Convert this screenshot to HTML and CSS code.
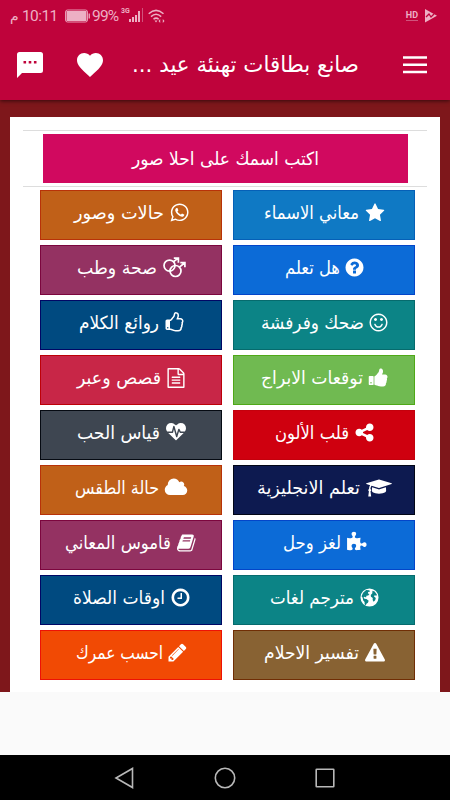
FILE: index.html
```html
<!DOCTYPE html>
<html lang="ar" dir="rtl">
<head>
<meta charset="utf-8">
<title>صانع بطاقات تهنئة عيد</title>
<link rel="stylesheet" href="styles.css">
</head>
<body>
<header class="header">
  <div class="status" dir="ltr">
    <span class="meridiem">م</span><span class="time">10:11</span>
    <svg class="battery" viewBox="0 0 26 14"><rect x=".5" y="1" width="22" height="12" rx="2" fill="none" stroke="#e89bb4"/><rect x="1.500" y="2" width="20" height="10" fill="#edb0c4"/><path d="M23.500 4.500h1.500v5h-1.500z" fill="#e89bb4"/></svg>
    <span class="percent">99%</span>
    <span class="network">3G</span>
    <svg class="signal" viewBox="0 0 15 15"><path d="M0 11h2v3H0zM3 9h2v5H3zM6 7h2v7H6zM9 3h2v11H9z" fill="#edb0c4"/><path d="M13.500 0v14" stroke="#d0537c"/></svg>
    <svg class="wifi" viewBox="0 0 17 15"><g fill="none" stroke="#edb0c4" stroke-width="1.500"><path d="M.7 4.800Q8 -2 15.500 4.800M3 7.600q5-4.600 10.200 0M5.500 10.300q2.600-2.400 5.200 0"/></g><path d="M6.500 11.500h3L8 13.500zM10.500 12l1.700-2v4zM16.500 12l-1.700-2v4z" fill="#edb0c4"/></svg>
    <span class="spacer"></span>
    <span class="hd">HD</span>
    <svg class="play" viewBox="0 0 12 14"><path d="M0 0l12 6.800L0 13.600z" fill="#edb0c4"/><path d="M1 8l3-3 2 3 3-3" fill="none" stroke="#bf033b" stroke-width="1.300"/></svg>
  </div>
  <div class="toolbar">
    <svg class="menu" viewBox="0 0 24 18"><path d="M0 1.500h24M0 8.800h24M0 16h24" stroke="#fff" stroke-width="2.600"/></svg>
    <h1 class="title"><svg class="label" width="227" height="32"><text x="50%" y="23" textLength="227" lengthAdjust="spacingAndGlyphs">صانع بطاقات تهنئة عيد ...</text></svg></h1>
    <svg class="heart" viewBox="2 3 20 18.350"><path fill="#fff" d="M12 21.350l-1.450-1.320C5.400 15.360 2 12.280 2 8.500 2 5.420 4.420 3 7.500 3c1.740 0 3.410.81 4.500 2.090C13.090 3.810 14.760 3 16.500 3 19.580 3 22 5.420 22 8.500c0 3.780-3.400 6.860-8.550 11.540z"/></svg>
    <svg class="chat" viewBox="0 0 26 26"><path fill="#fff" fill-rule="evenodd" d="M2.500 0h21Q26 0 26 2.500v16Q26 21 23.500 21H5l-5 5V2.500Q0 0 2.500 0zM6.500 9v2.600h2.600V9zM11.700 9v2.600h2.600V9zM16.900 9v2.600h2.600V9z"/></svg>
  </div>
</header>
<main class="content">
  <section class="card">
    <div class="feature"><a class="banner"><svg class="label" width="187" height="26"><text x="50%" y="19" textLength="187" lengthAdjust="spacingAndGlyphs">اكتب اسمك على احلا صور</text></svg></a></div>
    <div class="grid">
      <a class="tile azure"><svg class="icon" viewBox="0 0 1792 1792"><path d="M1728 647q0 22-26 48l-363 354 86 500q1 7 1 20 0 21-10.500 35.500t-30.500 14.500q-19 0-40-12l-449-236-449 236q-22 12-40 12-21 0-31.500-14.500t-10.500-35.500q0-6 2-20l86-500-364-354q-25-27-25-48 0-37 56-46l502-73 225-455q19-41 49-41t49 41l225 455 502 73q56 9 56 46z"/></svg><svg class="label" width="95" height="26"><text x="50%" y="19" textLength="95" lengthAdjust="spacingAndGlyphs">معاني الاسماء</text></svg></a>
      <a class="tile orange"><svg class="icon slim" viewBox="0 0 1792 1792"><path d="M1113 974q13 0 97.500 44t89.500 53q2 5 2 15 0 33-17 76-16 39-71 65.500t-102 26.500q-57 0-190-62-98-45-170-118t-148-185q-72-107-71-194v-8q3-91 74-158 24-22 52-22 6 0 18 1.500t19 1.500q19 0 26.500 6.500t15.500 27.500q8 20 33 88t25 75q0 21-34.500 57.500t-34.500 46.500q0 7 5 15 34 73 102 137 56 53 151 101 12 7 22 7 15 0 54-48.500t52-48.500zm-203 530q127 0 243.500-50t200.500-134 134-200.500 50-243.500-50-243.500-134-200.500-200.500-134-243.500-50-243.500 50-200.500 134-134 200.500-50 243.500q0 203 120 368l-79 233 242-77q158 104 345 104zm0-1382q153 0 292.500 60t240.500 161 161 240.500 60 292.500-60 292.500-161 240.500-240.500 161-292.500 60q-195 0-365-94l-417 134 136-405q-108-178-108-389 0-153 60-292.500t161-240.500 240.500-161 292.500-60z"/></svg><svg class="label" width="90" height="26"><text x="50%" y="19" textLength="90" lengthAdjust="spacingAndGlyphs">حالات وصور</text></svg></a>
      <a class="tile blue"><svg class="icon slim" viewBox="0 0 1792 1792"><path d="M1024 1376v-192q0-14-9-23t-23-9h-192q-14 0-23 9t-9 23v192q0 14 9 23t23 9h192q14 0 23-9t9-23zm256-672q0-88-55.500-163t-138.500-116-170-41q-243 0-371 213-15 24 8 42l132 100q7 6 19 6 16 0 25-12 53-68 86-92 34-24 86-24 48 0 85.500 26t37.500 59q0 38-20 61t-68 45q-63 28-115.500 86.500t-52.500 125.500v36q0 14 9 23t23 9h192q14 0 23-9t9-23q0-19 21.500-49.500t54.500-49.500q32-18 49-28.500t46-35 44.500-48 28-60.500 12.500-81zm384 192q0 209-103 385.500t-279.500 279.500-385.500 103-385.500-103-279.500-279.500-103-385.500 103-385.500 279.500-279.500 385.500-103 385.500 103 279.500 279.500 103 385.500z"/></svg><svg class="label" width="55" height="26"><text x="50%" y="19" textLength="55" lengthAdjust="spacingAndGlyphs">هل تعلم</text></svg></a>
      <a class="tile plum"><svg class="icon mars" viewBox="0 0 23 21"><g fill="none" stroke="#fff" stroke-width="1.700"><circle cx="6.500" cy="8.600" r="5.500"/><circle cx="12.500" cy="14" r="5.500"/><path d="M10.400 4.700L15 1.400M10.800 1.200h4.600v4.600M16.400 10.100L21.500 6M17.300 5.600h4.600v4.600"/></g></svg><svg class="label" width="80" height="26"><text x="50%" y="19" textLength="80" lengthAdjust="spacingAndGlyphs">صحة وطب</text></svg></a>
      <a class="tile teal"><svg class="icon slim" viewBox="0 0 1792 1792"><path d="M1262 1075q-37 121-138 195t-228 74-228-74-138-195q-8-25 4-48.500t38-31.500q25-8 48.500 4t31.500 38q25 80 92.500 129.500t151.500 49.500 151.500-49.500 92.500-129.500q8-26 32-38t49-4 37 31.500 4 48.500zm-494-435q0 53-37.500 90.500t-90.500 37.500-90.500-37.500-37.500-90.500 37.500-90.500 90.500-37.500 90.500 37.500 37.500 90.500zm512 0q0 53-37.500 90.500t-90.500 37.500-90.500-37.500-37.500-90.500 37.500-90.500 90.500-37.500 90.500 37.500 37.500 90.500zm256 256q0-130-51-248.500t-136.500-204-204-136.500-248.500-51-248.500 51-204 136.500-136.500 204-51 248.500 51 248.500 136.500 204 204 136.500 248.500 51 248.500-51 204-136.500 136.500-204 51-248.500zm128 0q0 209-103 385.500t-279.500 279.500-385.500 103-385.500-103-279.500-279.500-103-385.500 103-385.500 279.500-279.500 385.500-103 385.500 103 279.500 279.500 103 385.500z"/></svg><svg class="label" width="103" height="26"><text x="50%" y="19" textLength="103" lengthAdjust="spacingAndGlyphs">ضحك وفرفشة</text></svg></a>
      <a class="tile navy"><svg class="icon slim" viewBox="0 0 1792 1792"><path d="M384 1344q0-26-19-45t-45-19-45 19-19 45 19 45 45 19 45-19 19-45zm1152-576q0-51-39-89.500t-89-38.500h-352q0-58 48-159.500t48-160.500q0-98-32-145t-128-47q-26 26-38 85t-30.500 125.500-59.500 109.500q-22 23-77 91-4 5-23 30t-31.500 41-34.500 42.500-40 44-38.500 35.500-40 27-35.500 9h-32v640h32q13 0 31.500 3t33 6.500 38 11 35 11.500 35.500 12.500 29 10.500q211 73 342 73h121q192 0 192-167 0-26-5-56 30-16 47.500-52.500t17.500-73.500-18-69q53-50 53-119 0-25-10-55.500t-25-47.500q32-1 53.500-47t21.500-81zm128-1q0 89-49 163 9 33 9 69 0 77-38 144 3 21 3 43 0 101-60 178 1 139-85 219.500t-227 80.500h-129q-96 0-189.500-22.500t-216.500-65.500q-116-40-138-40h-288q-53 0-90.500-37.500t-37.500-90.500v-640q0-53 37.500-90.500t90.500-37.500h274q36-24 137-155 58-75 107-128 24-25 35.500-85.500t30.500-126.500 62-108q39-37 90-37 84 0 151 32.500t102 101.500 35 186q0 93-48 192h176q104 0 180 76t76 179z"/></svg><svg class="label" width="80" height="26"><text x="50%" y="19" textLength="80" lengthAdjust="spacingAndGlyphs">روائع الكلام</text></svg></a>
      <a class="tile green"><svg class="icon slim" viewBox="0 0 1792 1792"><path d="M320 1344q0-26-19-45t-45-19q-27 0-45.500 19t-18.500 45q0 27 18.500 45.500t45.500 18.500q26 0 45-18.500t19-45.500zm160-512v640q0 26-19 45t-45 19h-288q-26 0-45-19t-19-45v-640q0-26 19-45t45-19h288q26 0 45 19t19 45zm1184 0q0 86-55 149 15 44 15 76 3 76-43 137 17 56 0 117-15 57-54 94 9 112-49 181-64 76-197 78h-129q-66 0-144-15.500t-121.500-29-120.500-39.500q-123-43-158-44-26-1-45-19.500t-19-44.500v-641q0-25 18-43.500t43-20.500q24-2 76-59t101-121q68-87 101-120 18-18 31-48t17.500-48.500 13.500-60.500q7-39 12.500-61t19.500-52 34-50q19-19 45-19 46 0 82.500 10.500t60 26 40 40.500 24 45 12 50 5 45 .5 39q0 38-9.500 76t-19 60-27.500 56q-3 6-10 18t-11 22-8 24h277q78 0 135 57t57 135z"/></svg><svg class="label" width="102" height="26"><text x="50%" y="19" textLength="102" lengthAdjust="spacingAndGlyphs">توقعات الابراج</text></svg></a>
      <a class="tile crimson"><svg class="icon file" viewBox="0 0 1792 1792"><path d="M1596 380q28 28 48 76t20 88v1152q0 40-28 68t-68 28h-1344q-40 0-68-28t-28-68v-1600q0-40 28-68t68-28h896q40 0 88 20t76 48zm-444-244v376h376q-10-29-22-41l-313-313q-12-12-41-22zm384 1528v-1024h-416q-40 0-68-28t-28-68v-416h-768v1536h1280zm-1024-864q0-14 9-23t23-9h704q14 0 23 9t9 23v64q0 14-9 23t-23 9h-704q-14 0-23-9t-9-23v-64zm736 224q14 0 23 9t9 23v64q0 14-9 23t-23 9h-704q-14 0-23-9t-9-23v-64q0-14 9-23t23-9h704zm0 256q14 0 23 9t9 23v64q0 14-9 23t-23 9h-704q-14 0-23-9t-9-23v-64q0-14 9-23t23-9h704z"/></svg><svg class="label" width="84" height="26"><text x="50%" y="19" textLength="84" lengthAdjust="spacingAndGlyphs">قصص وعبر</text></svg></a>
      <a class="tile red"><svg class="icon slim" viewBox="0 0 1792 1792"><path d="M1344 1024q133 0 226.500 93.500t93.500 226.500-93.500 226.500-226.500 93.500-226.500-93.500-93.500-226.500q0-12 2-34l-360-180q-92 86-218 86-133 0-226.500-93.500t-93.500-226.500 93.500-226.500 226.500-93.500q126 0 218 86l360-180q-2-22-2-34 0-133 93.500-226.500t226.500-93.500 226.500 93.500 93.500 226.500-93.500 226.500-226.500 93.500q-126 0-218-86l-360 180q2 22 2 34t-2 34l360 180q92-86 218-86z"/></svg><svg class="label" width="74" height="26"><text x="50%" y="19" textLength="74" lengthAdjust="spacingAndGlyphs">قلب الألون</text></svg></a>
      <a class="tile slate"><svg class="icon" viewBox="0 0 1792 1792"><path d="M1280 896h305q-5 6-10 10.500t-9 7.500l-3 4-623 600q-18 18-44 18t-44-18l-624-602q-5-2-21-20h369q22 0 39.500-13.500t22.500-34.500l70-281 190 667q6 20 23 33t39 13q21 0 38-13t23-33l146-485 56 112q18 35 57 35zm512-428q0 145-103 300h-369l-111-221q-8-17-25.500-27t-36.500-8q-45 5-56 46l-129 430-196-686q-6-20-23.500-33t-39.500-13-39 13.500-22 34.500l-116 464h-423q-103-155-103-300 0-220 127-344t351-124q62 0 126.500 21.500t120 58 95.500 68.500 76 68q36-36 76-68t95.500-68.500 120-58 126.500-21.500q224 0 351 124t127 344z"/></svg><svg class="label" width="83" height="26"><text x="50%" y="19" textLength="83" lengthAdjust="spacingAndGlyphs">قياس الحب</text></svg></a>
      <a class="tile midnight"><svg class="icon cap" viewBox="0 0 2304 1792"><path d="M1774 836l18 316q4 69-82 128t-235 93.500-323 34.500-323-34.500-235-93.500-82-128l18-316 574 181q22 7 48 7t48-7zm530-324q0 23-22 31l-1120 352q-4 1-10 1t-10-1l-652-206q-43 34-71 111.500t-34 178.500q63 36 63 109 0 69-58 107l58 433q2 14-8 25-9 11-24 11h-192q-15 0-24-11-10-11-8-25l58-433q-58-38-58-107 0-73 65-111 11-207 98-330l-333-104q-22-8-22-31t22-31l1120-352q4-1 10-1t10 1l1120 352q22 8 22 31z"/></svg><svg class="label" width="103" height="26"><text x="50%" y="19" textLength="103" lengthAdjust="spacingAndGlyphs">تعلم الانجليزية</text></svg></a>
      <a class="tile orange"><svg class="icon cloud" viewBox="0 0 2048 1792"><path d="M1984 1152q0 159-112.500 271.500t-271.500 112.500h-1088q-185 0-316.500-131.500t-131.500-316.500q0-132 71-241.500t187-163.500q-2-28-2-43 0-212 150-362t362-150q158 0 286.500 88t187.500 230q70-62 166-62 106 0 181 75t75 181q0 75-41 138 129 30 213 134.500t84 239.500z"/></svg><svg class="label" width="84" height="26"><text x="50%" y="19" textLength="84" lengthAdjust="spacingAndGlyphs">حالة الطقس</text></svg></a>
      <a class="tile blue"><svg class="icon slim" viewBox="0 0 1792 1792"><path d="M1755 1083q0 81-44.500 135t-123.500 54q-41 0-77.500-17.500t-59-38-56.500-38-71-17.500q-110 0-110 124 0 39 16 115t15 115v5q-22 0-33 1-34 3-97.500 11.500t-115.500 13.500-98 5q-61 0-103-26.500t-42-83.500q0-37 17.500-71t38-56.500 38-59 17.500-77.500q0-79-54-123.500t-135-44.500q-84 0-143 45.500t-59 127.500q0 43 15 83t33.500 64.500 33.500 53 15 50.500q0 45-46 89-37 35-117 35-95 0-245-24-9-2-27.500-4t-27.500-4l-13-2q-1 0-3-1-2 0-2-1v-1024q2 1 17.500 3.500t34 5 21.500 3.500q150 24 245 24 80 0 117-35 46-44 46-89 0-22-15-50.500t-33.500-53-33.500-64.500-15-83q0-82 59-127.500t144-45.500q80 0 134 44.500t54 123.500q0 41-17.500 77.500t-38 59-38 56.500-17.500 71q0 57 42 83.500t103 26.500q64 0 180-15t163-17v2q-1 2-3.500 17.500t-5 34-3.500 21.500q-24 150-24 245 0 80 35 117 44 46 89 46 22 0 50.500-15t53-33.500 64.500-33.500 83-15q82 0 127.500 59t45.500 143z"/></svg><svg class="label" width="58" height="26"><text x="50%" y="19" textLength="58" lengthAdjust="spacingAndGlyphs">لغز وحل</text></svg></a>
      <a class="tile plum"><svg class="icon" viewBox="0 0 1792 1792"><path d="M1639 478q40 57 18 129l-275 906q-19 64-76.500 107.500t-122.500 43.500h-923q-77 0-148.500-53.500t-99.500-131.500q-24-67-2-127 0-4 3-27t4-37q1-8-3-21.500t-3-19.500q2-11 8-21t16.500-23.500 16.500-23.500q23-38 45-91.500t30-91.500q3-10 .5-30t-.5-28q3-11 17-28t17-23q21-36 42-92t25-90q1-9-2.500-32t.5-28q4-13 22-30.500t22-22.500q19-26 42.500-84.500t27.500-96.500q1-8-3-25.500t-2-26.500q2-8 9-18t18-23 17-21q8-12 16.500-30.500t15-35 16-36 19.500-32 26.500-23.500 36-11.500 47.500 5.500l-1 3q38-9 51-9h761q74 0 114 56t18 130l-274 906q-36 119-71.500 153.500t-128.500 34.500h-869q-27 0-38 15-11 16-1 43 24 70 144 70h923q29 0 56-15.500t35-41.500l300-987q7-22 5-57 38 15 59 43zm-1064 2q-4 13 2 22.500t20 9.500h608q13 0 25.500-9.500t16.500-22.500l21-64q4-13-2-22.500t-20-9.500h-608q-13 0-25.500 9.500t-16.500 22.500zm-83 256q-4 13 2 22.500t20 9.500h608q13 0 25.500-9.500t16.500-22.500l21-64q4-13-2-22.500t-20-9.500h-608q-13 0-25.500 9.500t-16.500 22.500z"/></svg><svg class="label" width="106" height="26"><text x="50%" y="19" textLength="106" lengthAdjust="spacingAndGlyphs">قاموس المعاني</text></svg></a>
      <a class="tile teal"><svg class="icon slim" viewBox="0 0 20 20"><path fill-rule="evenodd" d="M10 1.400a8.600 8.600 0 1 0 0 17.200a8.600 8.600 0 1 0 0-17.200zM3.900 5.400L6.800 2.900l3 .1.700 1.300-1.800.4-.2 1.600 1.500.4-1.200 1.400-1.700.2-.4 1.700-1.300-.8-1.100.7.9 1.300 1.900.3 2.100 1.500-.7 1.900-1.400 1-.6 1.700-1.100-1.100-.1-2.300-1.400-1.700-.4-2.300-1.100-1.400zM12.800 3.600l2.100.8 2.200 3-.6 1-1.600-.5-.6 1.200 1.700 1.300-.6 2.300-1.500 1.300-.9-1.700.1-1.900-1.700-1-.2-1.900 1.500-1.600z"/></svg><svg class="label" width="84" height="26"><text x="50%" y="19" textLength="84" lengthAdjust="spacingAndGlyphs">مترجم لغات</text></svg></a>
      <a class="tile navy"><svg class="icon slim" viewBox="0 0 1792 1792"><path d="M1024 544v448q0 14-9 23t-23 9h-320q-14 0-23-9t-9-23v-64q0-14 9-23t23-9h224v-352q0-14 9-23t23-9h64q14 0 23 9t9 23zm416 352q0-148-73-273t-198-198-273-73-273 73-198 198-73 273 73 273 198 198 273 73 273-73 198-198 73-273zm224 0q0 209-103 385.500t-279.500 279.500-385.500 103-385.500-103-279.500-279.500-103-385.500 103-385.500 279.500-279.500 385.500-103 385.500 103 279.500 279.500 103 385.500z"/></svg><svg class="label" width="92" height="26"><text x="50%" y="19" textLength="92" lengthAdjust="spacingAndGlyphs">اوقات الصلاة</text></svg></a>
      <a class="tile brown"><svg class="icon" viewBox="0 0 1792 1792"><path d="M1024 1375v-190q0-14-9.500-23.500t-22.500-9.500h-192q-13 0-22.500 9.500t-9.500 23.500v190q0 14 9.500 23.500t22.500 9.500h192q13 0 22.500-9.500t9.500-23.500zm-2-374l18-459q0-12-10-19-13-11-24-11h-220q-11 0-24 11-10 7-10 21l17 457q0 10 10 16.500t24 6.500h185q14 0 23.500-6.500t10.500-16.500zm-14-934l768 1408q35 63-2 126-17 29-46.500 46t-63.500 17h-1536q-34 0-63.500-17t-46.500-46q-37-63-2-126l768-1408q17-31 47-49t65-18 65 18 47 49z"/></svg><svg class="label" width="95" height="26"><text x="50%" y="19" textLength="95" lengthAdjust="spacingAndGlyphs">تفسير الاحلام</text></svg></a>
      <a class="tile flame"><svg class="icon slim" viewBox="0 0 1792 1792"><path d="M491 1536l91-91-235-235-91 91v107h128v128h107zm523-928q0-22-22-22-10 0-17 7l-542 542q-7 7-7 17 0 22 22 22 10 0 17-7l542-542q7-7 7-17zm-54-192l416 416-832 832h-416v-416zm683 96q0 53-37 90l-166 166-416-416 166-165q36-38 90-38 53 0 91 38l235 234q37 39 37 91z"/></svg><svg class="label" width="87" height="26"><text x="50%" y="19" textLength="87" lengthAdjust="spacingAndGlyphs">احسب عمرك</text></svg></a>
    </div>
  </section>
</main>
<div class="ad"></div>
<nav class="nav" dir="ltr">
  <svg viewBox="0 0 22 22"><path d="M18.500 1.500v19L2 11z"/></svg>
  <svg viewBox="0 0 22 22"><circle cx="11" cy="11" r="9.700"/></svg>
  <svg viewBox="0 0 22 22"><rect x="2.200" y="2.200" width="17.600" height="17.600" rx=".5"/></svg>
</nav>
</body>
</html>
```
FILE: styles.css
```css
* { box-sizing: border-box; }
body {
  margin: 0;
  width: 450px;
  height: 800px;
  overflow: hidden;
  display: flex;
  flex-direction: column;
  background: #fafafa;
  font-family: "DejaVu Sans", sans-serif;
  color: #fff;
}
svg { display: block; flex: none; }
.label { overflow: visible; }
.label text { fill: #fff; text-anchor: middle; }
.header {
  position: relative;
  flex: none;
  height: 100px;
  background: #bf033b;
  box-shadow: 0 1px 4px rgba(0, 0, 0, .6);
}
.status {
  display: flex;
  align-items: center;
  height: 32px;
  padding: 0 13px 0 10px;
  font: 15.500px/32px Roboto, "DejaVu Sans", sans-serif;
  color: #edb0c4;
}
.meridiem { width: 12px; font: 14px/30px "DejaVu Sans", sans-serif; }
.time { width: 43px; letter-spacing: -.6px; }
.battery { width: 26px; height: 14px; }
.percent { width: 29px; margin-left: 1px; font-size: 15.500px; letter-spacing: -.8px; }
.network { width: 8px; font: bold 7px/8px Roboto, sans-serif; margin-bottom: 10px; }
.signal { width: 15px; height: 15px; margin-bottom: 1px; }
.wifi { width: 17px; height: 15px; margin-left: 4px; }
.spacer { flex: 1; }
.hd { font: bold 9px/9px Roboto, sans-serif; border-bottom: 1px solid #d0537c; margin-right: 7px; }
.play { width: 12px; height: 14px; }
.toolbar {
  display: flex;
  align-items: center;
  height: 66px;
  padding: 0 23px 0 17px;
}
.menu { width: 24px; height: 18px; }
.title {
  flex: 1;
  margin: 0 44px 0 0;
  font-size: 22px;
  font-weight: 400;
}
.heart { width: 26px; height: 24px; margin-left: 34px; }
.chat { width: 26px; height: 26px; }
.content {
  flex: none;
  height: 592px;
  padding: 17px 10px 0;
  background: #7e171b;
}
.card {
  height: 575px;
  padding: 13px 13px 0;
  background: #fff;
}
.feature {
  display: flex;
  justify-content: center;
  height: 57px;
  padding: 3px 0;
  border-top: 1px solid #ddd;
  border-bottom: 1px solid #ddd;
}
.banner {
  display: flex;
  align-items: center;
  justify-content: center;
  width: 365px;
  background: #d1095f;
  font-size: 18px;
}
.grid {
  display: grid;
  grid-template-columns: 182px 182px;
  grid-auto-rows: 50px;
  gap: 5px 11px;
  justify-content: start;
  padding: 3px 12px 0 0;
}
.tile {
  display: flex;
  align-items: center;
  justify-content: center;
  gap: 6px;
  padding-bottom: 5px;
  border: 1px solid;
  font-size: 18px;
}
.icon { width: 20px; height: 20px; fill: #fff; overflow: visible; }
.slim { width: 21px; height: 21px; margin: 0 -1.500px; }
.file { margin: 0 -1px; }
.mars { width: 23px; height: 21px; }
.cap { width: 26px; }
.cloud { width: 24px; height: 21px; margin: 0 -1px; }
.azure { background: #0f79c4; border-color: #0560b7; }
.orange { background: #c06018; border-color: #b83208; }
.blue { background: #0c6bd7; border-color: #0345c9; }
.plum { background: #943262; border-color: #7c063e; }
.teal { background: #0c8486; border-color: #066b6d; }
.navy { background: #004a80; border-color: #000765; }
.green { background: #70ba51; border-color: #4fa817; }
.crimson { background: #c82647; border-color: #bd0008; }
.red { background: #cf000f; border-color: #c4000c; }
.slate { background: #3e4651; border-color: #050a12; }
.midnight { background: #0d1a50; border-color: #020617; }
.brown { background: #886233; border-color: #702e05; }
.flame { background: #f14a04; border-color: #ee1105; }
.ad { flex: none; height: 63px; background: #fafafa; }
.nav {
  display: flex;
  justify-content: space-between;
  align-items: center;
  height: 45px;
  padding: 0 114px;
  background: #000;
}
.nav svg { width: 22px; height: 22px; fill: none; stroke: #b8b8b8; stroke-width: 1.600; }
```
